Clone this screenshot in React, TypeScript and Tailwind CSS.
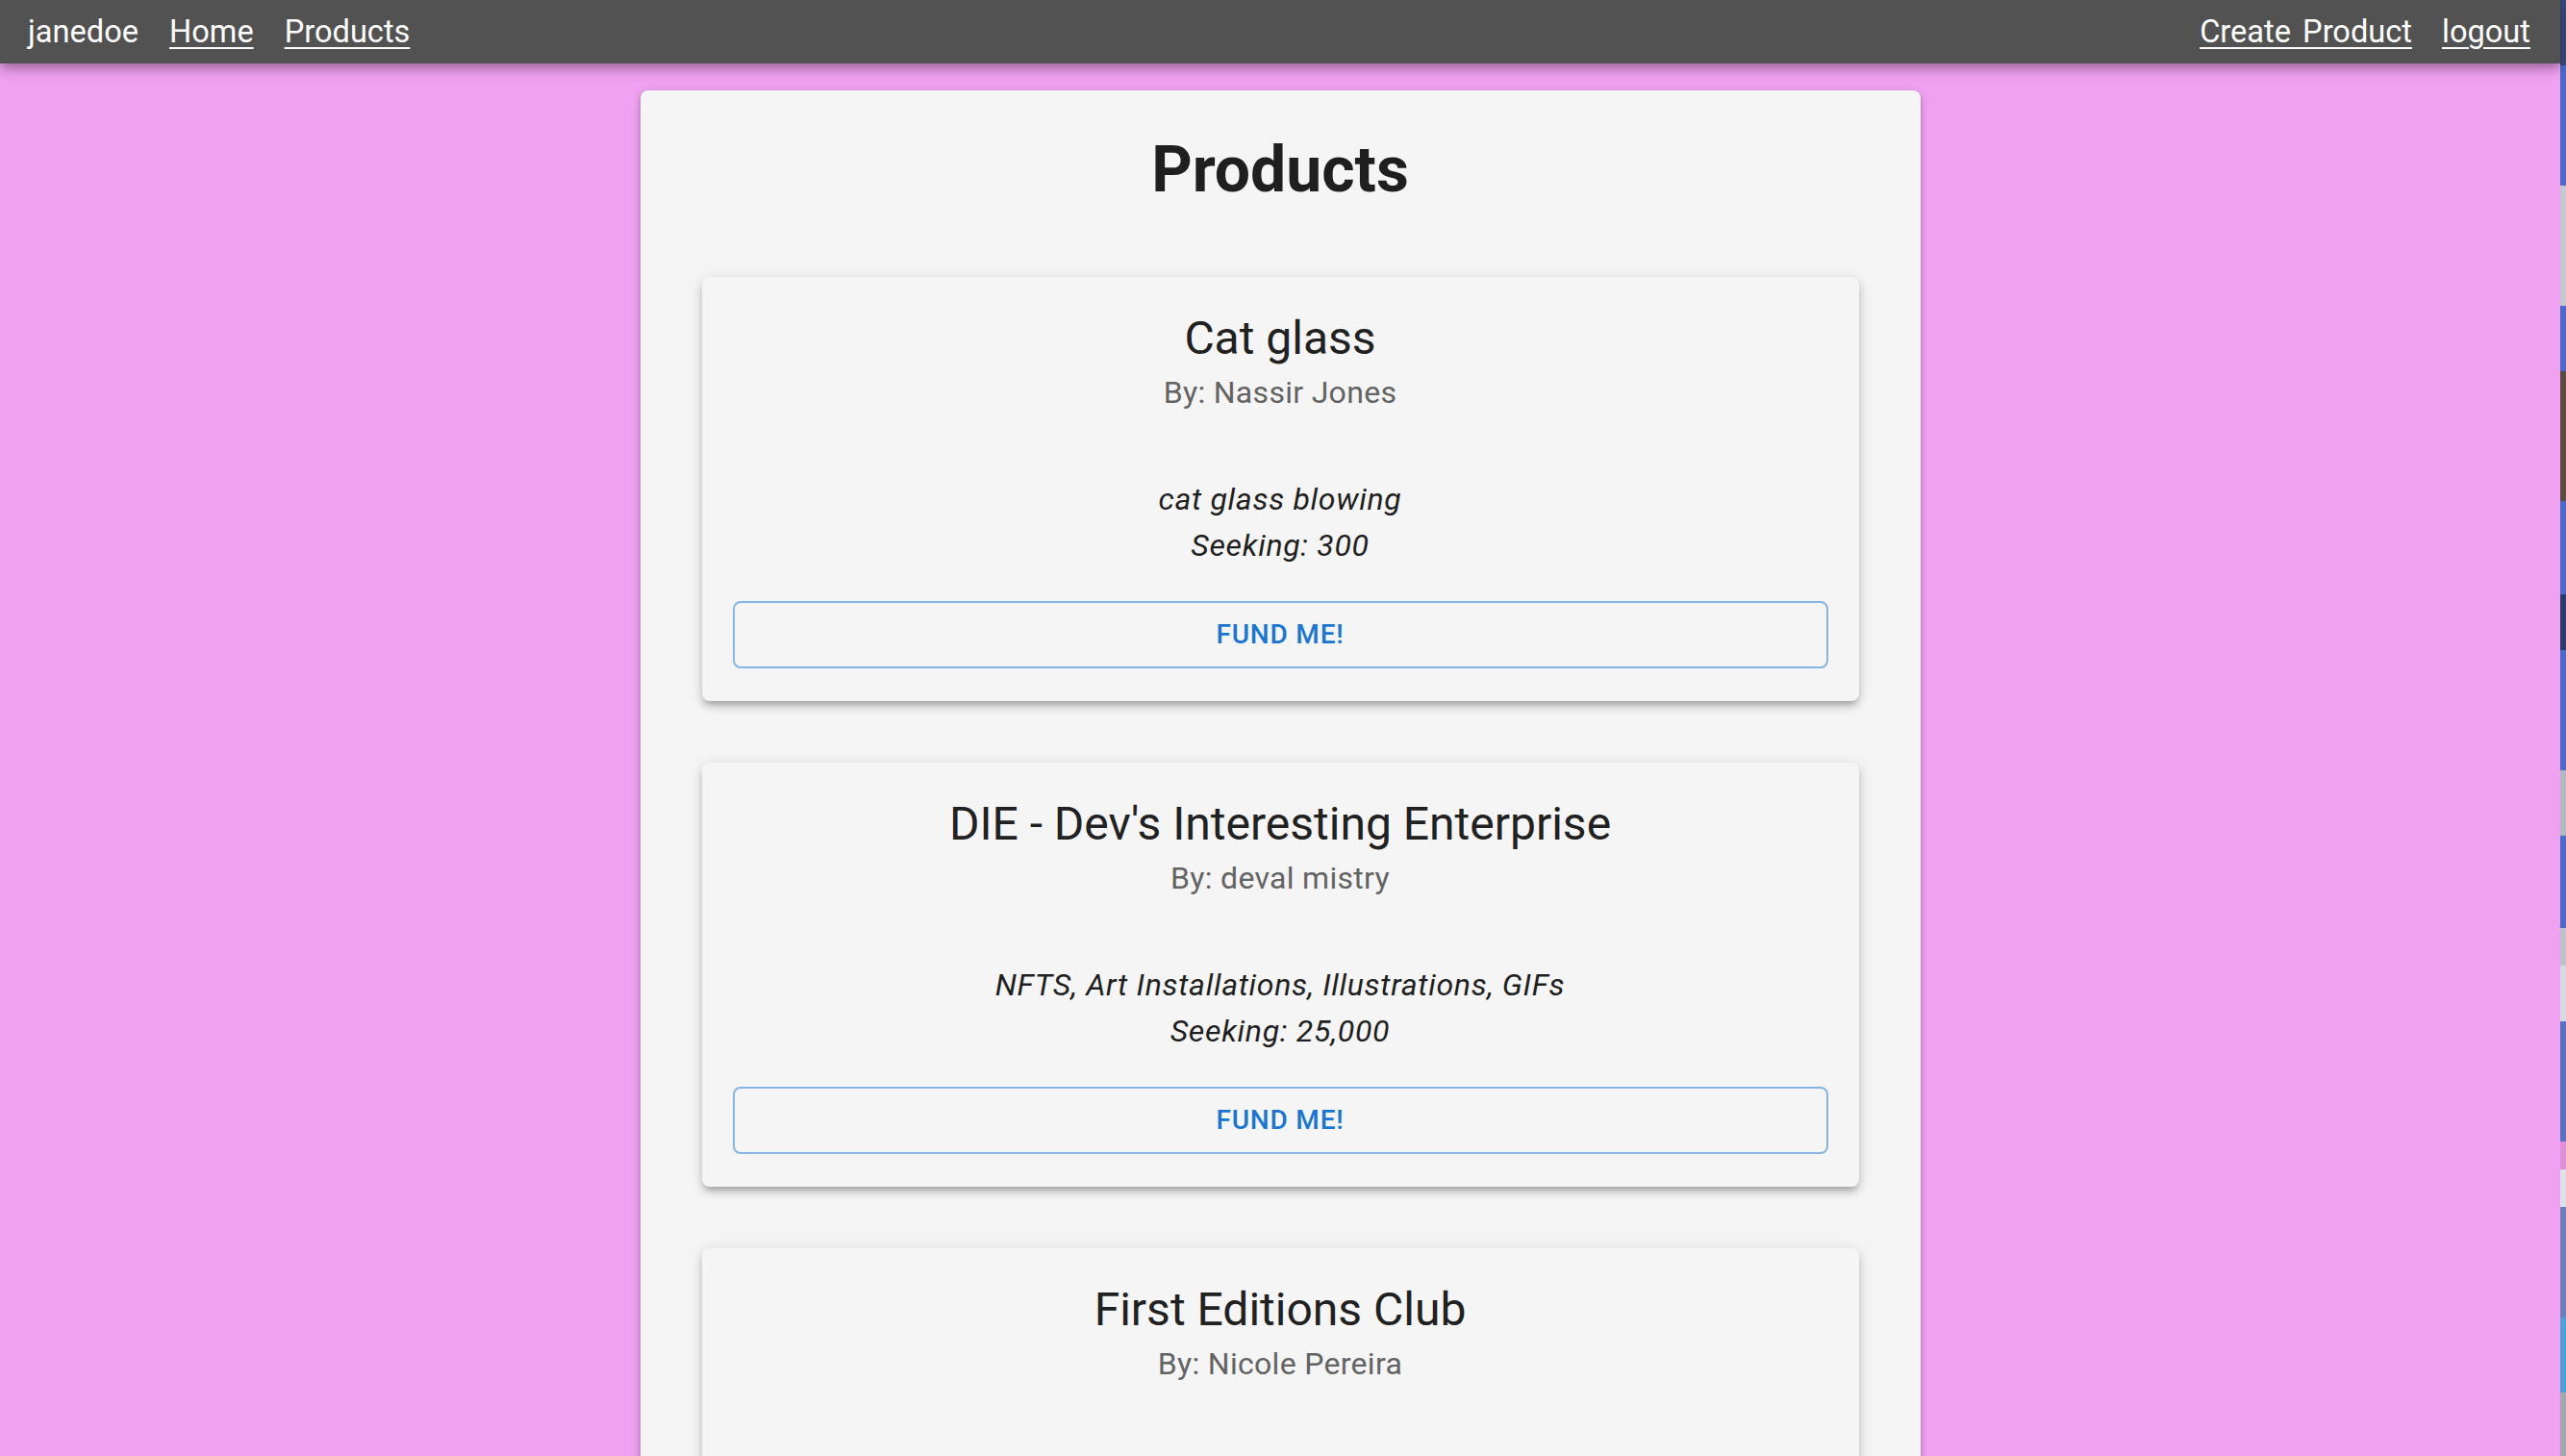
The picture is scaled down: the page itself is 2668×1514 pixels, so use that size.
import React from "react";

type Product = {
  title: string;
  by: string;
  description: string;
  seeking: string;
};

const products: Product[] = [
  { title: "Cat glass", by: "Nassir Jones", description: "cat glass blowing", seeking: "300" },
  {
    title: "DIE - Dev's Interesting Enterprise",
    by: "deval mistry",
    description: "NFTS, Art Installations, Illustrations, GIFs",
    seeking: "25,000",
  },
  { title: "First Editions Club", by: "Nicole Pereira", description: "", seeking: "" },
];

function ProductCard({ p }: { p: Product }) {
  return (
    <div className="bg-[#f5f5f5] rounded-[8px] shadow-[0_6px_6px_-4px_rgba(0,0,0,0.2),0_6px_8px_0_rgba(0,0,0,0.14),0_2px_16px_0_rgba(0,0,0,0.12)] px-[32px] pt-[32px] pb-[34px] text-center">
      <div className="text-[48px] leading-[64px] text-[#212121]">{p.title}</div>
      <div className="text-[32px] leading-[48px] text-[#636363] tracking-[0.3px]">By: {p.by}</div>
      <div className="mt-[63px] min-h-[96px] text-[32px] leading-[48px] italic text-[#1f1f1f] tracking-[0.7px]">
        {p.description && <div>{p.description}</div>}
        {p.seeking && <div>Seeking: {p.seeking}</div>}
      </div>
      <button className="mt-[34px] w-full h-[70px] rounded-[8px] border-2 border-[rgba(25,118,210,0.5)] text-[28px] font-medium uppercase tracking-[0.8px] text-[#1976d2]">
        Fund me!
      </button>
    </div>
  );
}

const strip = [
  "h-[68px] bg-[#3b4a78]",
  "h-[125px] bg-[#4a6bc8]",
  "h-[125px] bg-[#c6c8d0]",
  "h-[68px] bg-[#4a6bc8]",
  "h-[135px] bg-[#5a4a40]",
  "h-[97px] bg-[#4a6bc8]",
  "h-[58px] bg-[#2a3a6a]",
  "h-[125px] bg-[#4a6bc8]",
  "h-[68px] bg-[#b0b8c0]",
  "h-[96px] bg-[#4a6bc8]",
  "h-[39px] bg-[#c0c0c8]",
  "h-[58px] bg-[#d8d8e0]",
  "h-[125px] bg-[#5a70c0]",
  "h-[29px] bg-[#e090d8]",
  "h-[39px] bg-[#e0e0e8]",
  "h-[115px] bg-[#6a80b8]",
  "h-[78px] bg-[#50a0d8]",
  "h-[66px] bg-[#a0a8b0]",
];

export default function App() {
  return (
    <div className="flex w-full min-h-screen bg-[#f0a1f1] font-['Roboto','Liberation_Sans',sans-serif]">
      <div className="flex-1 min-w-0 flex flex-col">
        <nav className="relative z-10 h-[66px] bg-[#525252] shadow-[0_4px_8px_-2px_rgba(0,0,0,0.2),0_8px_10px_0_rgba(0,0,0,0.14),0_2px_20px_0_rgba(0,0,0,0.12)] flex items-center justify-between pl-[29px] pr-[31px] text-[32.6px] text-white">
          <div className="flex items-center gap-[32px]">
            <span>janedoe</span>
            <a href="#" className="underline underline-offset-[5px] decoration-2">Home</a>
            <a href="#" className="underline underline-offset-[5px] decoration-2">Products</a>
          </div>
          <div className="flex items-center gap-[31px]">
            <a href="#" className="underline underline-offset-[5px] decoration-2 [word-spacing:4px]">Create Product</a>
            <a href="#" className="underline underline-offset-[5px] decoration-2">logout</a>
          </div>
        </nav>
        <main className="flex justify-center pt-[28px]">
          <div className="w-1/2 bg-[#f5f5f5] rounded-[8px] shadow-[0_2px_4px_-1px_rgba(0,0,0,0.2),0_4px_6px_0_rgba(0,0,0,0.14),0_2px_12px_0_rgba(0,0,0,0.12)] px-[64px] pt-[44px] pb-[64px]">
            <h1 className="text-center text-[66px] leading-[78px] font-bold text-[#1f1f1f] mb-[72px]">Products</h1>
            <div className="flex flex-col gap-[64px]">
              {products.map((p) => (
                <ProductCard key={p.title} p={p} />
              ))}
            </div>
          </div>
        </main>
      </div>
      <div className="w-[6px] shrink-0 flex flex-col">
        {strip.map((c, i) => (
          <div key={i} className={c} />
        ))}
      </div>
    </div>
  );
}
